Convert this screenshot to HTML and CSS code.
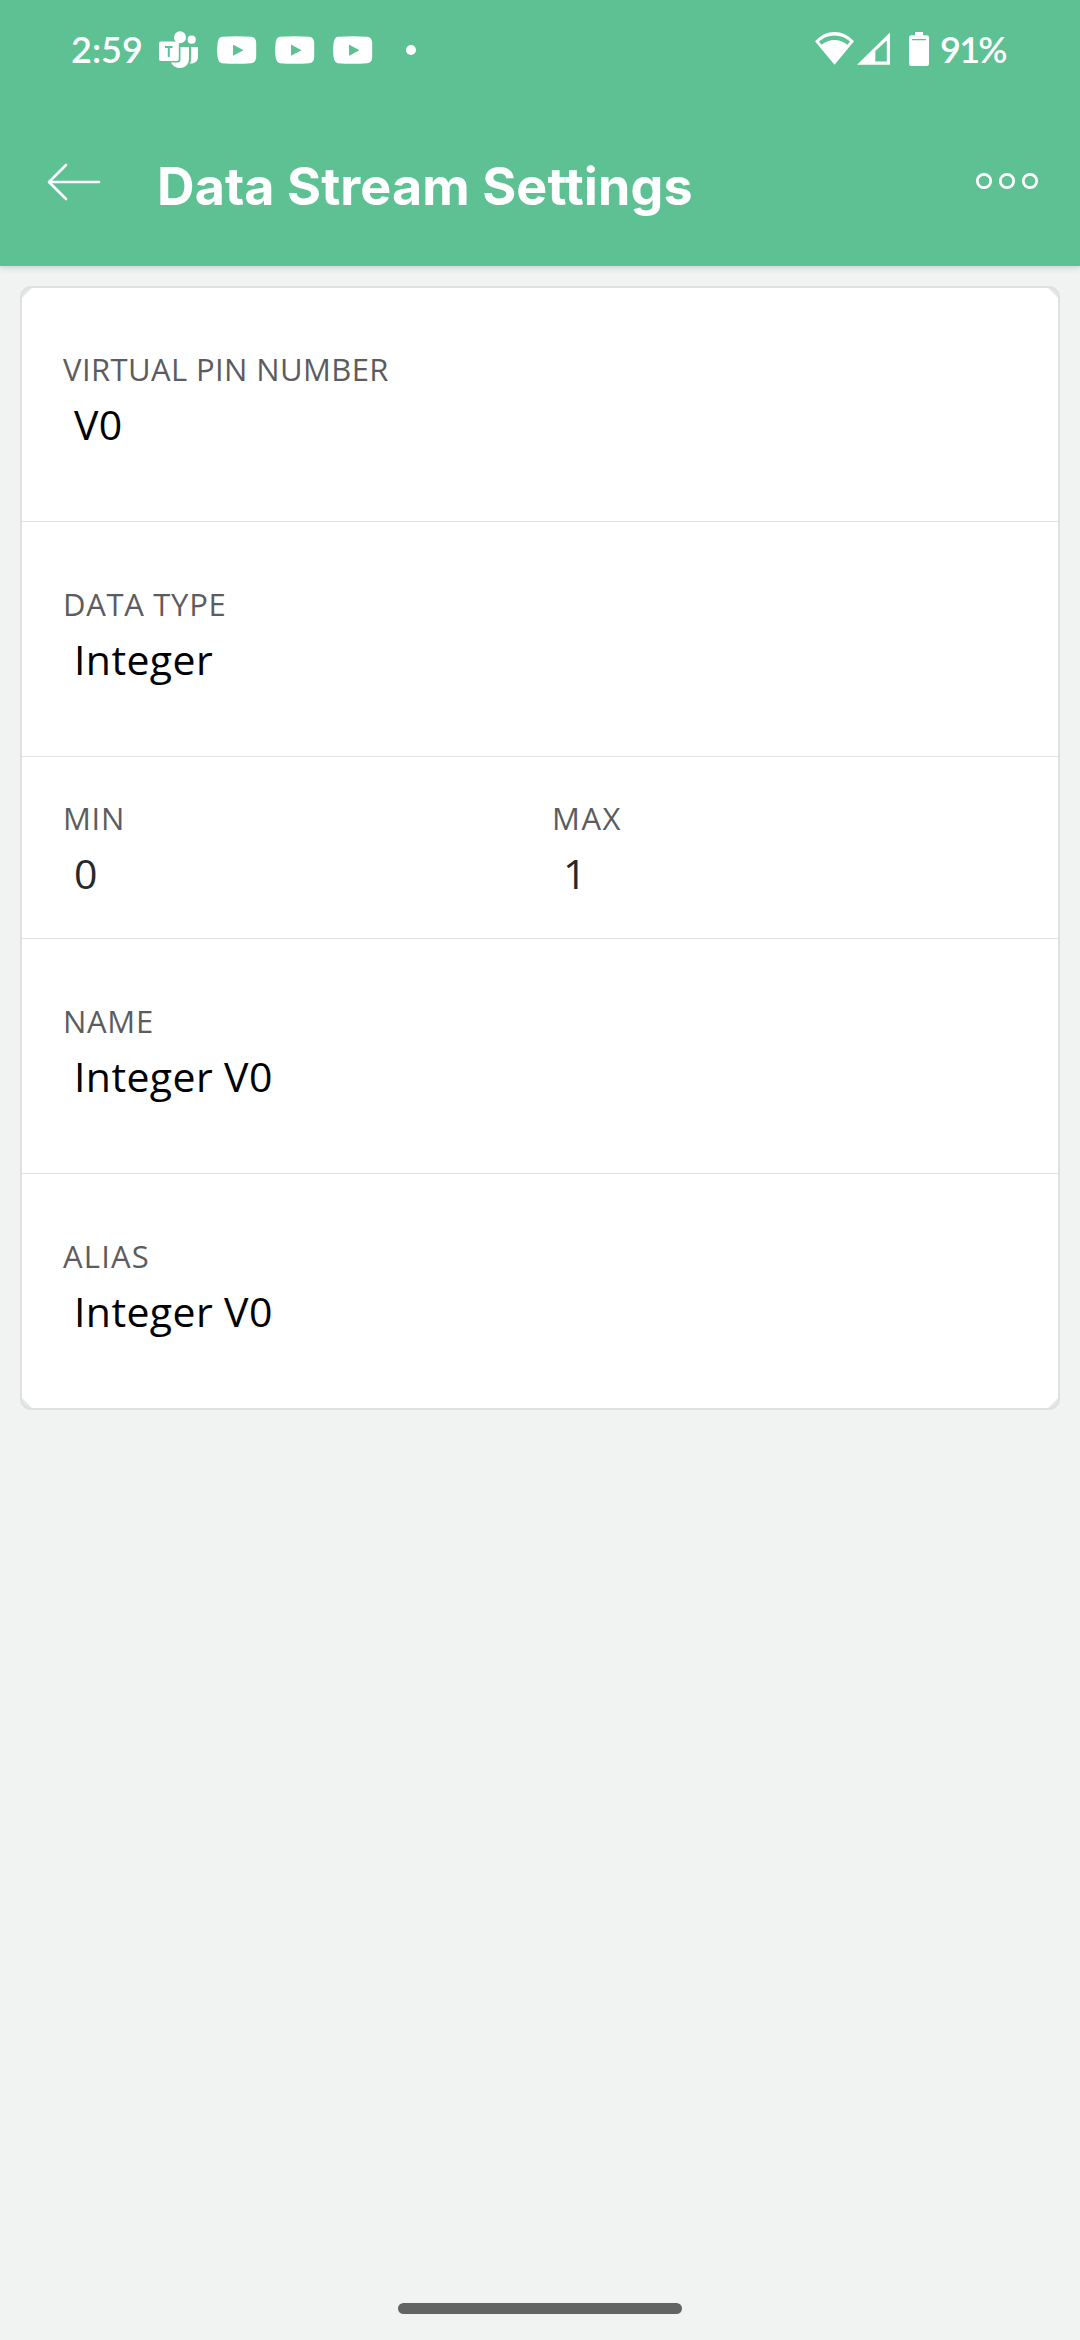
FILE: index.html
```html
<!DOCTYPE html>
<html lang="en">
<head>
<meta charset="utf-8">
<title>Data Stream Settings</title>
<link rel="stylesheet" href="styles.css">
</head>
<body>
<div class="screen">
  <header class="top">
    <div class="status">
      <span class="clock">2:59</span>
      <svg class="teams" width="40" height="40" viewBox="0 0 40 40" fill="#fff">
        <circle cx="21" cy="7.2" r="6"/>
        <circle cx="32.7" cy="9.7" r="4.1"/>
        <path d="M21.5 17H30V28.5C30 34 26.5 38 21 38C16.500 38 13.500 35.500 12 32.500H18.500Q21.500 32.500 21.500 29.500Z"/>
        <path d="M32.200 17H39V26.500C39 31 36 33.800 31 33.600Q32.200 31 32.200 28Z"/>
        <rect x="0" y="11.500" width="19.800" height="19.500" rx="2"/>
        <path d="M6 17H13.600M9.800 17V27" fill="none" stroke="#5ec193" stroke-width="2"/>
      </svg>
      <svg class="video" width="40" height="28" viewBox="0 0 40 28"><path fill="#fff" fill-rule="evenodd" d="M5 .8Q20-.5 34 .8Q39 1.200 39.200 7V21Q39 27 34 27.200Q20 28.500 5 27.200Q1.200 26.500.600 21Q-.3 14 .600 7Q1.200 1.200 5 .8ZM16 8.500V19.800L26.500 14.200Z"/></svg>
      <svg class="video" width="40" height="28" viewBox="0 0 40 28"><path fill="#fff" fill-rule="evenodd" d="M5 .8Q20-.5 34 .8Q39 1.200 39.200 7V21Q39 27 34 27.200Q20 28.500 5 27.200Q1.200 26.500.600 21Q-.3 14 .600 7Q1.200 1.200 5 .8ZM16 8.500V19.800L26.500 14.200Z"/></svg>
      <svg class="video" width="40" height="28" viewBox="0 0 40 28"><path fill="#fff" fill-rule="evenodd" d="M5 .8Q20-.5 34 .8Q39 1.200 39.200 7V21Q39 27 34 27.200Q20 28.500 5 27.200Q1.200 26.500.600 21Q-.3 14 .600 7Q1.200 1.200 5 .8ZM16 8.500V19.800L26.500 14.200Z"/></svg>
      <span class="more-dot"></span>
      <svg class="signals" width="76" height="34" viewBox="0 0 76 34">
        <path fill="#fff" fill-rule="evenodd" d="M0 9.300Q8.500 0 19.500 0T39 9.300L19.500 32.800ZM4 9.600L6.600 12.800Q12.500 8 19.500 8T32.400 12.800L35 9.600Q28.500 3.600 19.500 3.600T4 9.600Z"/>
        <path fill="#fff" fill-rule="evenodd" d="M42 32.800L75 .5V32.800ZM60.300 19V29.500H71.800V8.500Z"/>
      </svg>
      <svg class="battery" width="20" height="34" viewBox="0 0 20 34"><path fill="#fff" fill-rule="evenodd" d="M6 0H14V3.200H17.500Q20 3.200 20 5.500V31.500Q20 34 17.500 34H2.500Q0 34 0 31.500V5.500Q0 3.200 2.500 3.200H6ZM3 7V8.300H17V7Z"/></svg>
      <span class="percent">91%</span>
    </div>
    <div class="bar">
      <svg class="back" width="54" height="38" viewBox="0 0 54 38"><path d="M19 2L2 19L19 36M3 19H52" fill="none" stroke="#fff" stroke-width="2.600" stroke-linecap="round" stroke-linejoin="round"/></svg>
      <h1 class="title">Data Stream Settings</h1>
      <svg class="menu" width="64" height="18" viewBox="0 0 64 18" fill="none" stroke="#fff" stroke-width="2.700"><circle cx="9" cy="9" r="6.700"/><circle cx="32" cy="9" r="6.700"/><circle cx="55" cy="9" r="6.700"/></svg>
    </div>
  </header>
  <main class="card">
    <section class="row first"><div class="field"><span class="label pin">VIRTUAL PIN NUMBER</span><span class="value">V0</span></div></section>
    <section class="row"><div class="field"><span class="label">DATA TYPE</span><span class="value">Integer</span></div></section>
    <section class="row range">
      <div class="field"><span class="label">MIN</span><span class="value soft">0</span></div>
      <div class="field"><span class="label max">MAX</span><span class="value soft">1</span></div>
    </section>
    <section class="row"><div class="field"><span class="label">NAME</span><span class="value">Integer V0</span></div></section>
    <section class="row last"><div class="field"><span class="label alias">ALIAS</span><span class="value">Integer V0</span></div></section>
  </main>
  <footer class="nav"><span class="handle"></span></footer>
</div>
</body>
</html>
```
FILE: styles.css
```css
* { box-sizing: border-box; }
body { margin: 0; background: #f0f3f2; }
.screen { display: flex; flex-direction: column; width: 1080px; height: 2340px; font-family: "Open Sans", "Noto Sans", sans-serif; }
.top { height: 266px; flex: none; background: #5ec193; color: #fff; box-shadow: 0 1px 7px rgba(0, 0, 0, .18); }
.status { display: flex; align-items: center; height: 100px; padding-left: 71px; font: 600 36px/44px Lato, sans-serif; }
.clock { width: 88px; margin-top: -2px; white-space: nowrap; }
.teams { margin-right: 18px; }
.video { margin-right: 18px; }
.more-dot { width: 10px; height: 10px; margin-left: 15px; border-radius: 50%; background: #fff; }
.signals { margin-left: 399px; margin-top: -3px; }
.battery { margin-left: 18px; margin-top: -2px; }
.percent { margin: -2px 0 0 11px; letter-spacing: -1.700px; }
.bar { display: flex; align-items: center; height: 163px; padding: 0 41px 0 47px; }
.menu { margin-top: -1px; }
.title { flex: 1; margin: 10px 0 0 56px; font: 700 52px/64px Inter, sans-serif; letter-spacing: .1px; white-space: nowrap; }
.card {
  flex: none;
  margin: 20px 20px 0;
  border: 2px solid #dfe0e0;
  border-radius: 11px;
  background:
    linear-gradient(135deg, #e5e7e6 6.500px, transparent 7.500px),
    linear-gradient(225deg, #e5e7e6 6.500px, transparent 7.500px),
    linear-gradient(45deg, #e5e7e6 6.500px, transparent 7.500px),
    linear-gradient(315deg, #e5e7e6 6.500px, #fff 7.500px);
}
.row { display: flex; height: 235px; padding: 62px 41px 0; border-bottom: 1px solid #e2e2e2; }
.first { height: 234px; padding-top: 61px; }
.last { height: 234px; border-bottom: 0; }
.range { height: 182px; padding-top: 41px; }
.range .field { flex: none; width: 489px; }
.range .field + .field { width: 400px; }
.field { display: flex; flex-direction: column; gap: 7px; }
.label { font-size: 31px; line-height: 40px; letter-spacing: .7px; color: #5c5c60; white-space: nowrap; }
.pin { letter-spacing: .4px; }
.max { letter-spacing: 1.500px; }
.alias { letter-spacing: 1.200px; }
.value { padding-left: 11px; font-size: 41px; font-weight: 430; line-height: 56px; letter-spacing: .4px; color: #000; white-space: nowrap; }
.soft { color: #28282c; }
.nav { display: flex; justify-content: center; align-items: flex-end; flex: 1; padding-bottom: 26px; }
.handle { width: 284px; height: 11px; border-radius: 6px; background: #616462; }
```
